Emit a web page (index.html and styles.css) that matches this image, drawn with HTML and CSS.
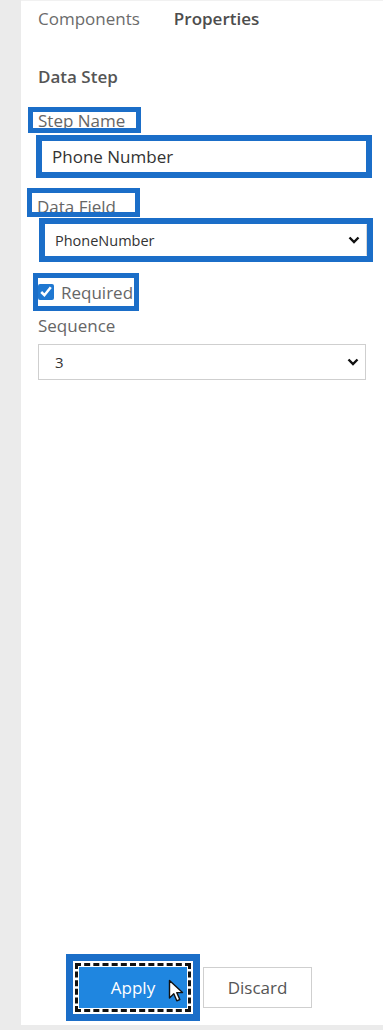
FILE: index.html
```html
<!DOCTYPE html>
<html lang="en">
<head>
  <meta charset="UTF-8" />
  <title>Data Step Properties</title>
  <link rel="stylesheet" href="styles.css">
</head>
<body>
  <div class="panel">
    <nav class="tabs">
      <span class="tab">Components</span>
      <span class="tab active">Properties</span>
    </nav>

    <h2 class="step-title">Data Step</h2>

    <form class="fields">
      <label class="mark label-mark step-label">Step Name</label>
      <div class="mark name-mark">
        <input class="text-input" value="Phone Number" />
      </div>

      <label class="mark label-mark field-label">Data Field</label>
      <div class="mark field-mark">
        <div class="select-wrap">
          <select class="select small">
            <option>PhoneNumber</option>
          </select>
          <svg class="chevron" width="12" height="8" viewBox="0 0 12 8"><path d="M1.5 1.5 L6 6 L10.5 1.5" fill="none" stroke="#111" stroke-width="2.4"/></svg>
        </div>
      </div>

      <label class="mark check-mark">
        <input type="checkbox" checked />
        <span>Required</span>
      </label>

      <label class="plain-label">Sequence</label>
      <div class="select-wrap seq-wrap">
        <select class="select">
          <option>3</option>
        </select>
        <svg class="chevron" width="12" height="8" viewBox="0 0 12 8"><path d="M1.5 1.5 L6 6 L10.5 1.5" fill="none" stroke="#111" stroke-width="2.4"/></svg>
      </div>
    </form>

    <div class="actions">
      <div class="mark apply-mark">
        <div class="focus-ring">
          <button class="btn primary" type="button">
            Apply
            <svg class="pointer" width="16" height="24" viewBox="0 0 16 24"><path d="M1.5 1.5 L1.5 19 L5.8 14.8 L8.8 21.8 L11.8 20.5 L8.8 13.6 L14.5 13.6 Z" fill="#fff" stroke="#111" stroke-width="1.4" stroke-linejoin="round"/></svg>
          </button>
        </div>
      </div>
      <button class="btn" type="button">Discard</button>
    </div>
  </div>
</body>
</html>
```

FILE: styles.css
```css
:root {
  --mark: #1b6ec8;
  --primary: #1f86e0;
  --label: #666;
  --text: #333;
  --line: #cfcfcf;
}

body {
  margin: 0;
  background: #ebebeb;
  font-family: 'Open Sans', 'Noto Sans', sans-serif;
  font-size: 17px;
  color: var(--text);
}

.panel {
  margin-left: 21px;
  height: 1025px;
  background: #fff;
  border-top: 1px solid #f1f1f1;
  box-sizing: border-box;
  display: flex;
  flex-direction: column;
}

.tabs {
  display: flex;
  gap: 34px;
  padding: 6px 0 0 17px;
  line-height: 23px;
}

.tab {
  color: #6b6b6b;
}

.tab.active {
  color: #4d4d4d;
  font-weight: 600;
}

.step-title {
  margin: 35px 0 0 17px;
  font-size: 17px;
  line-height: 23px;
  font-weight: 600;
  color: #555;
}

.fields {
  display: flex;
  flex-direction: column;
  align-items: flex-start;
}

/* annotation boxes */
.mark {
  border: 5px solid var(--mark);
  box-sizing: border-box;
  background: #fff;
}

.label-mark {
  display: block;
  width: 113px;
  color: var(--label);
  line-height: 16px;
  padding-left: 5px;
  overflow: hidden;
  white-space: nowrap;
}

.step-label {
  margin: 19px 0 0 7px;
  height: 26px;
  padding-top: 1px;
}

.field-label {
  margin: 10px 0 0 6px;
  height: 29px;
  line-height: 19px;
  padding-top: 4px;
}

.name-mark {
  margin: 2px 0 0 15px;
  width: 336px;
  height: 43px;
  border-width: 6px;
  display: flex;
}

.text-input {
  flex: 1;
  border: none;
  outline: none;
  padding: 0 0 0 10px;
  font: inherit;
  color: var(--text);
  background: transparent;
}

.field-mark {
  margin: 1px 0 0 18px;
  width: 334px;
  height: 44px;
  border-width: 6px;
  display: flex;
}

.select-wrap {
  position: relative;
  flex: 1;
  display: flex;
}

.select {
  flex: 1;
  appearance: none;
  border: 1px solid var(--line);
  border-radius: 0;
  background: #fff;
  font-family: inherit;
  font-size: 15px;
  color: var(--text);
  padding: 0 0 0 16px;
  outline: none;
}

.select.small {
  font-size: 14.5px;
  padding-left: 9px;
  border-color: #fff #d8d8d8 #fff #fff;
}

.chevron {
  position: absolute;
  right: 7px;
  top: 50%;
  margin-top: -4px;
  pointer-events: none;
}

.check-mark {
  margin: 11px 0 0 12px;
  width: 106px;
  height: 38px;
  display: flex;
  align-items: center;
  gap: 7px;
  color: var(--label);
}

.check-mark input {
  margin: 0;
  width: 16px;
  height: 16px;
  accent-color: #1f78d1;
}

.plain-label {
  margin: 3px 0 0 17px;
  line-height: 23px;
  color: var(--label);
}

.seq-wrap {
  flex: none;
  margin: 7px 0 0 17px;
  width: 328px;
  height: 36px;
}

.actions {
  margin-top: auto;
  margin-left: 45px;
  padding-bottom: 4px;
  display: flex;
  align-items: center;
  gap: 3px;
}

.apply-mark {
  border-width: 7px;
  padding: 2px;
}

.focus-ring {
  border: 3px dashed #111;
  padding: 1px;
}

.btn {
  width: 109px;
  height: 41px;
  border: 1px solid var(--line);
  background: #fff;
  color: #555;
  font-family: inherit;
  font-size: 17px;
  padding: 0;
  cursor: pointer;
}

.btn.primary {
  position: relative;
  display: block;
  width: 108px;
  border: none;
  background: var(--primary);
  color: #fff;
}

.pointer {
  position: absolute;
  left: 89px;
  top: 12px;
}
```
